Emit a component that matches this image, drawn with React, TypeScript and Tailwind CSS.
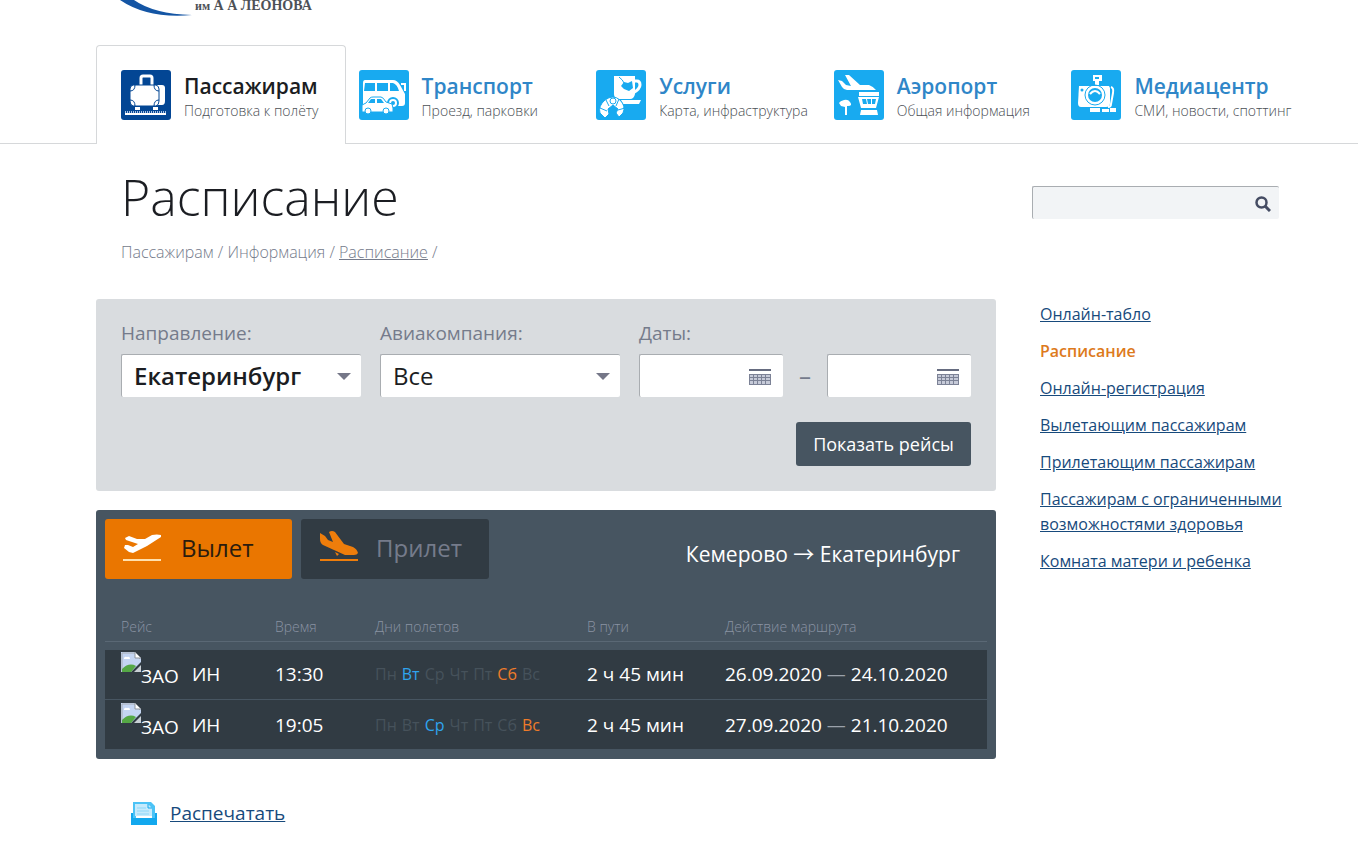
import { ReactNode } from "react";

interface Section {
  title: string;
  text: string;
  icon: ReactNode;
}

interface Flight {
  time: string;
  days: string[];
  from: string;
  to: string;
}

const sections: Section[] = [
  {
    title: "Пассажирам",
    text: "Подготовка к полёту",
    icon: (
      <>
        <path d="M20 15V8q0-2 2-2h7q2 0 2 2v7" fill="none" stroke="#fff" strokeWidth="3" />
        <path d="M35 15h6q3 0 3 3v13q0 4-3 4h-6z" fill="#fff" />
        <path d="M12 15h23q3 1 3 4v12q0 4-3 5H12q-3-1-3-5V19q0-3 3-4z" fill="#fff" stroke="#034694" strokeWidth="1" />
        <path d="M9 21q5 0 5-6M9 30q5 0 5 6M38 21q-5 0-5-6M38 30q-5 0-5 6" fill="none" stroke="#034694" strokeWidth="1" />
        <path d="M14 37h5v3h-5zM32 37h5v3h-5z" fill="#fff" />
        <path d="M4 42h41" stroke="#a9c3e6" strokeWidth="2" strokeDasharray="1 1" />
        <path d="M4 44h41" stroke="#fff" strokeWidth="2" />
      </>
    ),
  },
  {
    title: "Транспорт",
    text: "Проезд, парковки",
    icon: (
      <>
        <path d="M6 10h28q4 0 7 5l5 9v9q0 3-3 3H4V13q0-3 2-3z" fill="#fff" />
        <path d="M7 13h9v8H5l1-8zM18 13h11v8H18zM31 13h3q4 1 6 8h-9z" fill="#18aaf0" />
        <path d="M42 14h4v7" fill="none" stroke="#fff" strokeWidth="2" />
        <circle cx="34" cy="33" r="5" fill="#fff" stroke="#18aaf0" strokeWidth="2" />
        <circle cx="34" cy="33" r="2" fill="#18aaf0" />
        <path d="M3 42v-7l4-2 4-5q1-1 3-1h8q2 0 5 5l6 2 1 4v4H3z" fill="#fff" stroke="#18aaf0" strokeWidth="1" />
        <path d="M9 33l3-4h4v4zM18 29h4l3 4h-7z" fill="#18aaf0" />
        <circle cx="9" cy="41" r="3" fill="#fff" stroke="#18aaf0" strokeWidth="1" />
        <circle cx="27" cy="41" r="3" fill="#fff" stroke="#18aaf0" strokeWidth="1" />
      </>
    ),
  },
  {
    title: "Услуги",
    text: "Карта, инфраструктура",
    icon: (
      <>
        <path d="M18 6h21v18q-1 5-5 5H22q-4-1-4-5z" fill="#fff" />
        <path d="M38 11h3q3 0 3 4t-7 8" fill="none" stroke="#fff" strokeWidth="3" />
        <path d="M23 7q4 3 5 6" fill="none" stroke="#18aaf0" strokeWidth="1" />
        <path d="M28 12l4 1 4-2 1 7-4 3-5-2-3-3z" fill="#18aaf0" />
        <path d="M25 30h20l-2 4H27z" fill="#fff" />
        <path d="M4 43q-2-7 5-13 8-6 15 0 6 6 3 13l-4 4-3-4 2-4-5-4-5 4 1 5-4 4z" fill="#fff" stroke="#18aaf0" strokeWidth="1" />
        <path d="M4 38l7 3M10 30l3 6M23 29l-3 7M29 38l-7 2" stroke="#18aaf0" strokeWidth="1" />
        <circle cx="17" cy="31" r="3" fill="none" stroke="#18aaf0" strokeWidth="1" />
      </>
    ),
  },
  {
    title: "Аэропорт",
    text: "Общая информация",
    icon: (
      <>
        <path d="M4 10l4 1 4 4 5 1-6-11h4l11 10 9 0q5 2 7 5H13q-3 0-5-3z" fill="#fff" />
        <path d="M25 22h20v4H25zM24 27h21l-3 11H27z" fill="#fff" />
        <path d="M28 29h4l1 5h-4zM33 29h4v5h-3zM38 29h4l-1 5h-3z" fill="#18aaf0" />
        <path d="M27 40h16l1 5H26z" fill="#fff" />
        <path d="M5 33q1-2 5-3 4-1 6 2 3 4-2 4h-1v9h-2v-8l-4-1z" fill="#fff" />
      </>
    ),
  },
  {
    title: "Медиацентр",
    text: "СМИ, новости, споттинг",
    icon: (
      <>
        <path d="M22 5h9v6h-3v4h-4v-4h-2z" fill="#fff" />
        <path d="M24 7h4v2h-4z" fill="#18aaf0" />
        <path d="M40 17q3 1 2 6l-2 11q0 3-3 3" fill="none" stroke="#fff" strokeWidth="2" />
        <path d="M8 16h30l1 2v15q0 4-4 4H10q-3 0-3-4z" fill="#fff" />
        <circle cx="24" cy="25" r="10" fill="none" stroke="#18aaf0" strokeWidth="1" />
        <circle cx="24" cy="25" r="7" fill="#18aaf0" />
        <path d="M19 24q5-6 10 0" fill="none" stroke="#fff" strokeWidth="2" />
        <circle cx="11" cy="20" r="1.5" fill="#18aaf0" />
        <path d="M19 38h10v4H19zM31 39h7v3h-7zM39 38h6v4h-6z" fill="#fff" />
      </>
    ),
  },
];

const links = [
  "Онлайн-табло",
  "Расписание",
  "Онлайн-регистрация",
  "Вылетающим пассажирам",
  "Прилетающим пассажирам",
  "Пассажирам с ограниченными возможностями здоровья",
  "Комната матери и ребенка",
];

const week = ["Пн", "Вт", "Ср", "Чт", "Пт", "Сб", "Вс"];

const flights: Flight[] = [
  { time: "13:30", days: ["Вт", "Сб"], from: "26.09.2020", to: "24.10.2020" },
  { time: "19:05", days: ["Ср", "Вс"], from: "27.09.2020", to: "21.10.2020" },
];

function dayColor(day: string, active: boolean) {
  if (!active) return "text-[#46525b]";
  return day === "Сб" || day === "Вс" ? "text-[#ee7b2a]" : "text-[#2fa4ee]";
}

function SelectField({ id, label, value, bold }: { id: string; label: string; value: string; bold?: boolean }) {
  return (
    <div className="flex-1 min-w-0">
      <label htmlFor={id} className="block text-[19px] leading-6 mb-[9px] text-[#757b8b]">
        {label}
      </label>
      <div className="relative">
        <select
          id={id}
          className={`appearance-none block w-full h-[43px] pl-3 pr-8 text-2xl leading-8 rounded-xs bg-white text-[#1b1d22] border-t border-l border-[#a9adb1] ${
            bold ? "font-semibold" : ""
          }`}
        >
          <option>{value}</option>
        </select>
        <svg className="absolute right-2.5 top-[19px] w-3.5 h-2 pointer-events-none" viewBox="0 0 14 8">
          <path d="M0 0h14L7 7z" fill="#757788" />
        </svg>
      </div>
    </div>
  );
}

function DateField({ id, label }: { id: string; label: string }) {
  return (
    <div className="relative w-36">
      <input
        id={id}
        type="text"
        aria-label={label}
        className="block w-full h-[43px] px-3 text-lg rounded-xs bg-white border-t border-l border-[#a9adb1]"
      />
      <svg className="absolute right-3 top-[15px] w-[22px] h-4 pointer-events-none" viewBox="0 0 22 16">
        <path d="M0 0h22v2H0z" fill="#666c80" />
        <path d="M0 5h22v11H0z" fill="#7c8296" />
        <path
          d="M1 6h3v2H1zM5 6h3v2H5zM9 6h3v2H9zM13 6h3v2h-3zM17 6h4v2h-4zM1 9h3v2H1zM5 9h3v2H5zM9 9h3v2H9zM13 9h3v2h-3zM17 9h4v2h-4zM1 12h3v3H1zM5 12h3v3H5zM9 12h3v3H9zM13 12h3v3h-3zM17 12h4v3h-4z"
          fill="#c6cad8"
        />
      </svg>
    </div>
  );
}

function MissingImage() {
  return (
    <svg className="w-5 h-5 shrink-0" viewBox="0 0 20 20">
      <path d="M0 0h14l6 6v4L10 20H0z" fill="#c4d5f2" />
      <path d="M1 20V1h13l5 6" fill="none" stroke="#a8adb3" strokeWidth="1" />
      <path d="M14 0v6h6z" fill="#fff" stroke="#8f959b" />
      <path d="M3 6q1-2 3-1 3-1 3 2H3z" fill="#fff" />
      <path d="M1 17q7-7 14-3l-5 6H1z" fill="#55a845" />
      <path d="M20 13v7h-7z" fill="#c9d0d6" />
    </svg>
  );
}

export default function App() {
  return (
    <div className="min-h-screen bg-white font-['Open_Sans',sans-serif] text-[#1b1d22]">
      <header className="pl-[96px] h-[45px] overflow-hidden">
        <a href="#" className="flex items-start pl-6 gap-[3px]">
          <svg className="w-[72px] h-4" viewBox="0 0 72 16">
            <path d="M0 0Q28 19 72 15Q34 14 14 0z" fill="#1455a4" />
          </svg>
          <span className="font-['Liberation_Serif',serif] font-bold text-sm leading-3 text-[#4d5157] whitespace-nowrap">
            <span className="text-xs leading-3">им</span> А А ЛЕОНОВА
          </span>
        </a>
      </header>

      <nav className="pl-[96px] pr-[74px] border-b border-[#d6d8da]">
        <div className="grid grid-cols-5 items-start">
          {sections.map((section, index) => (
            <a
              key={section.title}
              href="#"
              className={`flex items-start gap-[13px] pt-6 border border-b-0 pl-6 whitespace-nowrap ${
                index === 0
                  ? "h-[99px] border-[#d6d8da] rounded-t-sm bg-white -mr-3 -mb-px"
                  : "h-[98px] border-transparent"
              }`}
            >
              <svg
                viewBox="0 0 50 50"
                className={`w-[50px] h-[50px] shrink-0 rounded-[3px] ${index === 0 ? "bg-[#034694]" : "bg-[#18aaf0]"}`}
              >
                {section.icon}
              </svg>
              <span>
                <span
                  className={`block text-[21px] leading-8 font-semibold ${
                    index === 0 ? "text-[#1b1d22]" : "text-[#2f86c8]"
                  }`}
                >
                  {section.title}
                </span>
                <span className="block text-sm leading-[18px] font-light text-[#4b4f55]">{section.text}</span>
              </span>
            </a>
          ))}
        </div>
      </nav>

      <div className="flex gap-9 pl-[96px] pr-[74px]">
        <main className="flex-1 min-w-0">
          <div className="pl-[25px] pt-[23px]">
            <h1 className="text-[50px] leading-[60px] font-light">Расписание</h1>
            <p className="pt-[13px] text-base leading-6 font-light text-[#757b8b]">
              <a href="#">Пассажирам</a> / <a href="#">Информация</a> /{" "}
              <a href="#" className="underline">
                Расписание
              </a>{" "}
              /
            </p>
          </div>

          <form className="mt-[35px] px-[25px] pt-[22px] pb-[25px] rounded-[3px] bg-[#d9dcdf]">
            <div className="flex gap-[19px]">
              <SelectField id="city" label="Направление:" value="Екатеринбург" bold />
              <SelectField id="airline" label="Авиакомпания:" value="Все" />
              <div>
                <label htmlFor="date-from" className="block text-[19px] leading-6 mb-[9px] text-[#757b8b]">
                  Даты:
                </label>
                <div className="flex items-center">
                  <DateField id="date-from" label="Дата с" />
                  <span className="w-11 text-center text-2xl leading-8 text-[#757b8b]">–</span>
                  <DateField id="date-to" label="Дата по" />
                </div>
              </div>
            </div>
            <div className="flex justify-end mt-[25px]">
              <button type="button" className="h-11 w-[175px] rounded-[3px] bg-[#475561] text-lg text-white">
                Показать рейсы
              </button>
            </div>
          </form>

          <section className="mt-[19px] p-[9px] rounded-[3px] bg-[#475561]">
            <div className="flex items-center gap-[9px]">
              <button
                type="button"
                className="flex items-center gap-5 w-[187px] h-[60px] pl-4 pb-0.5 rounded-[3px] bg-[#ea7600] text-2xl font-medium text-[#2a1c0e]"
              >
                <svg className="w-10 h-8" viewBox="0 0 40 32">
                  <path
                    d="M4 6l4-2 8 3 8 0 7-4q5-1 9 0l0 2-14 9-14 7-4-1-5-4 1-3 3 0 5 2 5-3L5 8z"
                    fill="#fff"
                  />
                  <path d="M2 28h38" stroke="#ffe0ae" strokeWidth="2" />
                </svg>
                Вылет
              </button>
              <button
                type="button"
                className="flex items-center gap-[15px] w-[188px] h-[60px] pl-4 pb-0.5 rounded-[3px] bg-[#313b43] text-2xl font-medium text-[#757b8b]"
              >
                <svg className="w-11 h-9" viewBox="0 0 44 36">
                  <path
                    d="M3 3l5 3 3 4 5 2-4-10q3-2 6 0l9 12 9 3q4 2 5 6-1 2-4 2l-9 0-22-10q-3-2-3-6z"
                    fill="#ee7d0b"
                  />
                  <path d="M18 22l4 2-2 2z" fill="#ee7d0b" />
                  <path d="M3 30h38" stroke="#ee7d0b" strokeWidth="2" />
                </svg>
                Прилет
              </button>
              <p className="flex-1 pr-[27px] pt-2 text-right text-[21px] leading-8 text-white whitespace-nowrap">
                Кемерово <span className="font-['Noto_Sans_CJK_SC',sans-serif]">→</span> Екатеринбург
              </p>
            </div>

            <table className="mt-[34px] w-full table-fixed text-left text-[19px] leading-6 text-white">
              <colgroup>
                <col className="w-[170px]" />
                <col className="w-[100px]" />
                <col className="w-[212px]" />
                <col className="w-[138px]" />
                <col />
              </colgroup>
              <thead>
                <tr className="border-b border-[#5a6875] text-sm text-[#8a93a3]">
                  <th className="h-7 pl-4 font-light">Рейс</th>
                  <th className="font-light">Время</th>
                  <th className="font-light">Дни полетов</th>
                  <th className="font-light">В пути</th>
                  <th className="font-light">Действие маршрута</th>
                </tr>
              </thead>
              <tbody className="before:block before:h-2 before:content-['']">
                {flights.map((flight) => (
                  <tr key={flight.time} className="h-[50px] bg-[#313b43] border-b border-[#475561]">
                    <td className="pl-4">
                      <div className="flex items-start h-11">
                        <MissingImage />
                        <span className="pt-3">ЗАО</span>
                        <span className="pl-[13px] pt-2.5">ИН</span>
                      </div>
                    </td>
                    <td>{flight.time}</td>
                    <td>
                      <div className="flex gap-[5px] text-base">
                        {week.map((day) => (
                          <span key={day} className={dayColor(day, flight.days.includes(day))}>
                            {day}
                          </span>
                        ))}
                      </div>
                    </td>
                    <td>2 ч 45 мин</td>
                    <td>
                      {flight.from} <span className="text-[#9aa1aa]">—</span> {flight.to}
                    </td>
                  </tr>
                ))}
              </tbody>
            </table>
          </section>

          <div className="flex items-center gap-3 pl-[34px] pt-10">
            <svg className="w-7 h-7" viewBox="0 0 28 28">
              <path d="M1 14h2v-2h22v2h2v12H1z" fill="#12a8ee" />
              <path d="M3 3h18l4 4v12H3z" fill="#4cc3f6" />
              <path d="M5 5h13l4 4v8H5z" fill="#c5eafc" />
              <path d="M18 5v4h4" fill="none" stroke="#12a8ee" />
              <path d="M7 9h9M7 12h12M7 15h12" stroke="#8ed7f8" />
              <path d="M6 17h16v2H6z" fill="#fff" />
            </svg>
            <a href="#" className="text-[19px] leading-7 underline text-[#174a7c]">
              Распечатать
            </a>
          </div>
        </main>

        <aside className="w-[252px] shrink-0 pt-[42px]">
          <div className="relative mr-[5px]">
            <input
              type="search"
              aria-label="Поиск"
              className="block w-full h-[33px] pl-3 pr-9 rounded-xs bg-[#f2f4f6] border-t border-l border-[#a9adb1]"
            />
            <button type="button" aria-label="Найти" className="absolute right-2 top-2.5">
              <svg className="block w-4 h-4" viewBox="0 0 16 16" fill="none" stroke="#454c63">
                <circle cx="6.5" cy="6.5" r="5" strokeWidth="2.5" />
                <path d="M10 10l5 5" strokeWidth="3" />
              </svg>
            </button>
          </div>
          <ul className="mt-[83px] pl-2 -mr-3 flex flex-col gap-3 text-base leading-[25px]">
            {links.map((link) => (
              <li key={link}>
                {link === "Расписание" ? (
                  <a href="#" className="font-semibold text-[#dd7a1c]">
                    {link}
                  </a>
                ) : (
                  <a href="#" className="underline text-[#174a7c]">
                    {link}
                  </a>
                )}
              </li>
            ))}
          </ul>
        </aside>
      </div>
    </div>
  );
}
